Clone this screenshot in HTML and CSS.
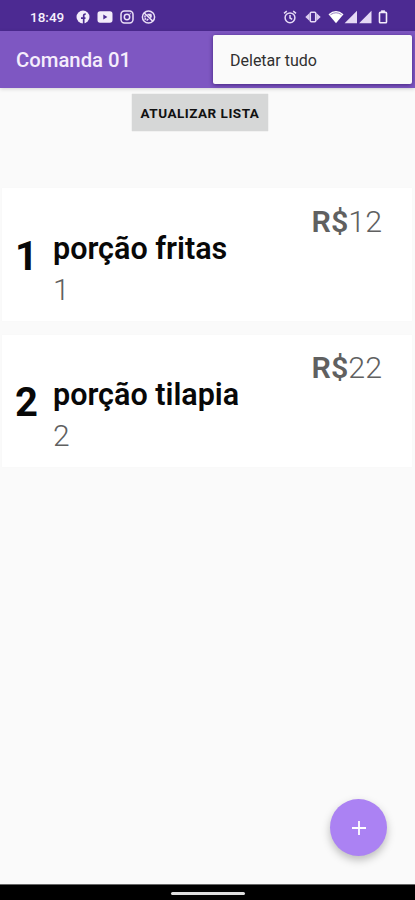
FILE: index.html
```html
<!DOCTYPE html>
<html lang="pt-BR">
<head>
<meta charset="utf-8">
<title>Comanda 01</title>
<link rel="stylesheet" href="styles.css">
</head>
<body>
<div class="screen">
  <div class="status">
    <span class="clock">18:49</span>
    <div class="apps">
      <svg width="14" height="14" viewBox="0 0 14 14"><circle cx="7" cy="7" r="6.5" fill="#f3ecfb"/><path d="M7.7 14V8.2M5 8.2h4.5M7.7 9V5.6q0-1.7 2-1.5" fill="none" stroke="#4c2a92" stroke-width="1.7"/></svg>
      <svg width="16" height="14" viewBox="0 0 16 14"><rect x=".5" y="1.3" width="15" height="11.4" rx="2.6" fill="#f3ecfb"/><path d="M6.3 4.6v4.8L10.4 7z" fill="#4c2a92"/></svg>
      <svg width="14" height="14" viewBox="0 0 14 14" fill="none" stroke="#eadff7" stroke-width="1.5"><rect x="1" y="1" width="12" height="12" rx="3.4"/><circle cx="7" cy="7" r="2.7"/><circle cx="10.4" cy="3.6" r=".4" stroke-width=".7"/></svg>
      <svg width="15" height="14" viewBox="0 0 15 14" fill="none" stroke="#eadff7" stroke-width="1.5"><circle cx="7.5" cy="7" r="6.1"/><path d="M3 2.8l9 8.6M3.6 9.6L5 8.2M5.6 10.6l1.6-1.7M6.4 4.5h3.4v3.2M4 5.6v2"/><path d="M8 4.5l2.3 2.3" stroke-width="2"/></svg>
    </div>
    <div class="system">
      <svg class="alarm" width="14" height="14" viewBox="0 0 14 14" fill="none" stroke="#e6daf6" stroke-width="1.5"><circle cx="7" cy="7.8" r="4.9"/><path d="M1 3.4l2.8-2.3M13 3.4l-2.8-2.3M7 5v3l2.2 1.4"/></svg>
      <svg class="vibrate" width="16" height="14" viewBox="0 0 16 14"><path d="M4.6 3v8L.3 7zM11.4 3v8L15.7 7z" fill="#dccdf0"/><rect x="5.3" y="2.2" width="5.4" height="9.6" rx="1" fill="none" stroke="#e6daf6" stroke-width="1.5"/></svg>
      <svg class="wifi" width="16" height="14" viewBox="0 0 16 14"><path d="M.5 4.2Q8-2 15.5 4.2L8 13.3z" fill="#fff"/><path d="M2.5 4.7Q8 .8 13.5 4.7" fill="none" stroke="#7d5fb3" stroke-width=".8"/></svg>
      <svg width="14" height="14" viewBox="0 0 14 14"><path d="M13 .8v12.4H.6z" fill="#e5d9f5"/></svg>
      <svg width="14" height="14" viewBox="0 0 14 14"><path d="M13.5 .8v12.4H1.1z" fill="#e5d9f5"/></svg>
      <svg class="battery" width="10" height="14" viewBox="0 0 10 14"><path d="M3.1.3h3.8v2H3.1z" fill="#f3ecfb"/><rect x="1.5" y="2.4" width="7" height="10.4" rx=".8" fill="none" stroke="#f3ecfb" stroke-width="1.6"/></svg>
    </div>
  </div>
  <header class="appbar">
    <h1>Comanda 01</h1>
    <div class="menu">Deletar tudo</div>
  </header>
  <main>
    <button class="refresh">ATUALIZAR LISTA</button>
    <div class="list">
      <article class="card">
        <div class="price"><b>R$</b>12</div>
        <div class="number">1</div>
        <div class="item"><h2>porção fritas</h2><p>1</p></div>
      </article>
      <article class="card">
        <div class="price"><b>R$</b>22</div>
        <div class="number">2</div>
        <div class="item"><h2>porção tilapia</h2><p>2</p></div>
      </article>
    </div>
    <button class="fab" aria-label="Adicionar"><svg width="16" height="16" viewBox="0 0 16 16"><path d="M8 1v14M1 8h14" stroke="#fff" stroke-width="1.8"/></svg></button>
  </main>
  <footer class="navbar"><span class="handle"></span></footer>
</div>
</body>
</html>
```
FILE: styles.css
```css
* { box-sizing: border-box; }
body { margin: 0; font-family: Roboto, "Liberation Sans", sans-serif; }
h1, h2, p { margin: 0; }
button { border: 0; padding: 0; font-family: inherit; }
svg { display: block; }
.screen {
  width: 415px;
  height: 900px;
  display: flex;
  flex-direction: column;
  background: #fafafa;
  overflow: hidden;
}
.status {
  height: 31px;
  flex: none;
  display: flex;
  align-items: center;
  padding: 2px 27px 0 30px;
  background: #4c2a92;
  color: #f6f0fc;
}
.clock { width: 46px; font-size: 13.5px; font-weight: 500; line-height: 16px; }
.apps { display: flex; gap: 7px; }
.system { display: flex; margin-left: auto; }
.vibrate { margin-left: 8px; }
.wifi { margin-left: 7px; }
.battery { margin-left: 6px; }
.appbar {
  position: relative;
  z-index: 1;
  height: 57px;
  flex: none;
  display: flex;
  align-items: center;
  padding: 1px 0 0 16px;
  background: #7e57c2;
  box-shadow: 0 1px 4px rgba(0, 0, 0, .16);
}
.appbar h1 { font-size: 20.3px; font-weight: 500; line-height: 24px; color: #f5edfc; }
.menu {
  position: absolute;
  top: 4px;
  left: 213px;
  width: 199px;
  height: 49px;
  padding-left: 17px;
  border-radius: 2px;
  background: #fafafa;
  box-shadow: 0 1px 4px rgba(30, 0, 80, .6);
  color: #303030;
  font-size: 16px;
  line-height: 51px;
}
main { position: relative; flex: 1; display: flex; flex-direction: column; padding-top: 6px; }
.refresh {
  width: 136px;
  height: 37px;
  margin-left: 132px;
  background: #d6d7d7;
  box-shadow: 0 0 1px #c4c4c4;
  color: #111;
  font-size: 13.5px;
  font-weight: 700;
  letter-spacing: .5px;
}
.list { display: flex; flex-direction: column; gap: 14px; margin: 57px 3px 0 2px; }
.card {
  height: 132.5px;
  display: grid;
  grid-template-columns: 51px 1fr;
  grid-template-rows: 27px 1fr;
  padding-top: 15.5px;
  background: #fff;
  box-shadow: 0 0 2px rgba(0, 0, 0, .025);
}
.price {
  grid-column: 1 / -1;
  padding-right: 30px;
  font-size: 30.4px;
  font-weight: 350;
  line-height: 36px;
  text-align: right;
  color: #606060;
}
.price b { font-weight: 600; }
.number { padding: 2px 0 0 13px; font-size: 40px; font-weight: 700; line-height: 47px; color: #080808; }
.item h2 { font-size: 30.5px; font-weight: 600; line-height: 36px; color: #080808; }
.item p { padding-top: 5px; font-size: 30px; font-weight: 350; line-height: 36px; color: #606060; }
.fab {
  position: absolute;
  right: 28px;
  bottom: 28px;
  width: 57px;
  height: 57px;
  display: grid;
  place-items: center;
  border-radius: 50%;
  background: #ab82f3;
  box-shadow: 0 4px 8px rgba(0, 0, 0, .25);
}
.navbar { height: 16px; flex: none; display: flex; justify-content: center; padding-top: 7px; background: #000; border-top: 1px solid #666; }
.handle { width: 74px; height: 3px; border-radius: 2px; background: #dedede; }
```
